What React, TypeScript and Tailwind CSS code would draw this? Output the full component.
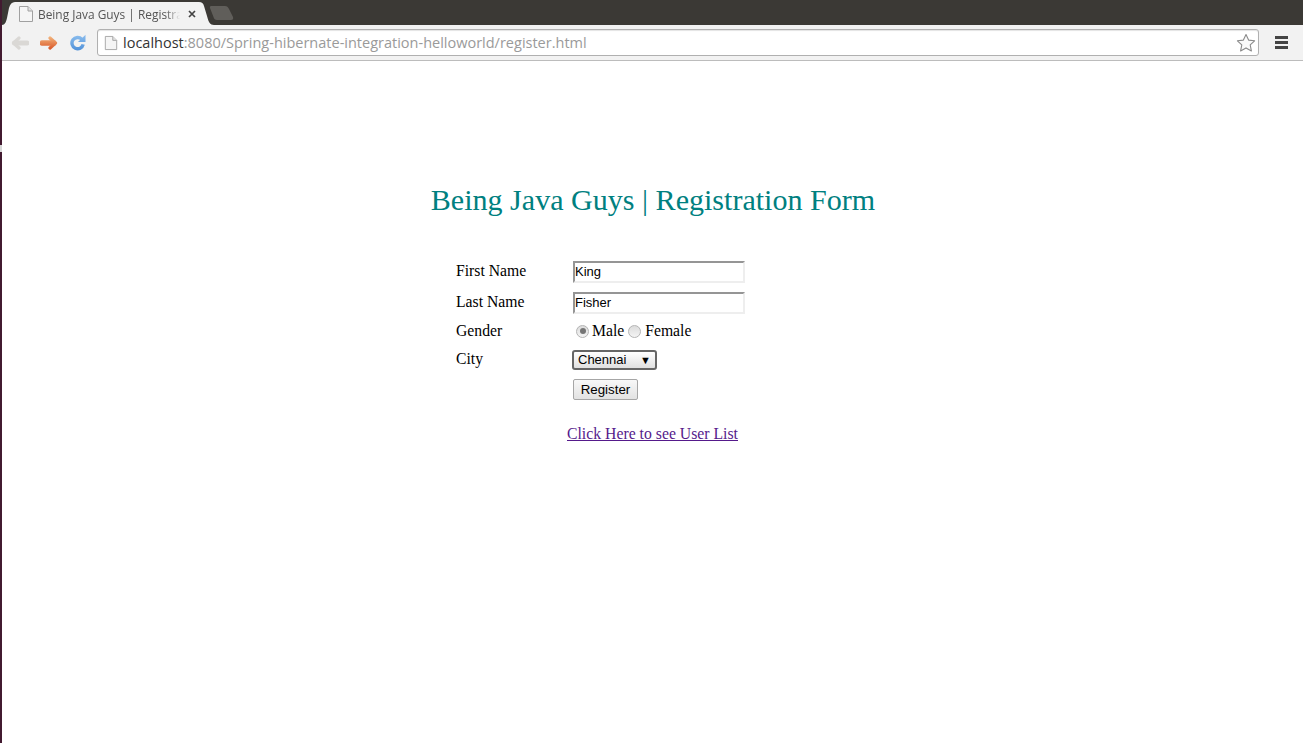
import React from "react";

const serif = "font-['Liberation_Serif',serif]";
const sans = "font-['Liberation_Sans',Arial,sans-serif]";
const ui = "font-['Open_Sans','Noto_Sans',sans-serif]";

function PageIcon({ className }: { className?: string }) {
  return (
    <svg viewBox="0 0 16 18" className={className} fill="none">
      <path d="M1.500 1.500h8.500l4.500 4.500v10.500h-13z" fill="#f5f5f5" stroke="#a0a0a0" />
      <path d="M10 1.500v4.500h4.500" fill="#e2e2e2" stroke="#a0a0a0" />
    </svg>
  );
}

function Row({ label, children, className }: { label: string; children: React.ReactNode; className: string }) {
  return (
    <div className={`flex ${className}`}>
      <div className="w-[117px] pt-[1px] text-[15.7px] leading-[18px]">{label}</div>
      <div className="flex items-start">{children}</div>
    </div>
  );
}

function TextBox({ value }: { value: string }) {
  return (
    <div className={`w-[172px] h-[22px] border-2 border-t-[#959595] border-l-[#959595] border-r-[#eeeeee] border-b-[#eeeeee] bg-white text-[13px] leading-[18px] text-black ${sans}`}>
      {value}
    </div>
  );
}

function Radio({ checked }: { checked?: boolean }) {
  return (
    <span className="w-[13px] h-[13px] rounded-full border border-[#b4b4b4] bg-gradient-to-b from-[#dcdcdc] to-[#f4f4f4] flex items-center justify-center shrink-0">
      {checked && <span className="w-[6px] h-[6px] rounded-full bg-[#757575]" />}
    </span>
  );
}

export default function App() {
  return (
    <div className="flex h-[743px] w-[1303px] overflow-hidden bg-white">
      <div className="w-[2px] shrink-0 bg-[#421a30] flex flex-col">
        <div className="h-[145px]" />
        <div className="h-[7px] bg-[#d8d8d8]" />
      </div>
      <div className="flex-1 min-w-0 flex flex-col">
        <div className="h-[25px] shrink-0 bg-[#3b3935] flex items-end">
          <div className="relative w-[212px] h-[23px] shrink-0 flex items-center">
            <svg viewBox="0 0 212 23" className="absolute inset-0 w-[212px] h-[23px]">
              <path d="M0 23c3 0 4-3 5-7l2-10c1-4 3-6 6-6h184c3 0 4 1 5 4l3 10c1.500 6 3 9 7 9z" fill="#f2f2f2" />
            </svg>
            <PageIcon className="relative ml-[16px] w-[16px] h-[18px] shrink-0" />
            <span className={`relative ml-[4px] w-[145px] overflow-hidden whitespace-nowrap text-[11.9px] leading-[16px] text-[#555555] [mask-image:linear-gradient(to_right,black_88%,transparent_98%)] ${ui}`}>
              Being Java Guys | Registration Form
            </span>
            <svg viewBox="0 0 8 8" className="relative ml-[5px] w-[8px] h-[8px]" stroke="#444" strokeWidth="1.7">
              <path d="M1 1l6 6M7 1l-6 6" />
            </svg>
          </div>
          <svg viewBox="0 0 25 14" className="w-[25px] h-[14px] -ml-[5px] mb-[5px] shrink-0">
            <path d="M2 0h14c2 0 3 1 4 3l4 8c.5 2 0 3-2 3H8c-2 0-3-1-3.500-3L1 2c-.3-1 0-2 1-2z" fill="#605e5a" />
          </svg>
        </div>
        <div className="h-[36px] shrink-0 bg-[#f2f2f2] border-b border-[#bcbcbc] flex items-center pl-[9px] pr-[15px]">
          <svg viewBox="0 0 18 14" className="w-[18px] h-[14px] shrink-0" fill="none" stroke="#dad8d5" strokeLinecap="round" strokeLinejoin="round">
            <path d="M3.500 7H16" strokeWidth="5" />
            <path d="M8 2L2.500 7L8 12" strokeWidth="3.200" />
          </svg>
          <svg viewBox="0 0 18 14" className="w-[18px] h-[14px] ml-[11px] shrink-0" fill="none" strokeLinecap="round" strokeLinejoin="round">
            <defs>
              <linearGradient id="fw" gradientUnits="userSpaceOnUse" x1="0" y1="1" x2="0" y2="13">
                <stop offset="0" stopColor="#f2b27a" />
                <stop offset="1" stopColor="#d9592a" />
              </linearGradient>
            </defs>
            <path d="M2 6.500H14v1H2z" stroke="url(#fw)" strokeWidth="4.500" />
            <path d="M10 2l5.500 5L10 12" stroke="url(#fw)" strokeWidth="3.200" />
          </svg>
          <svg viewBox="0 0 18 18" className="w-[17px] h-[17px] ml-[11px] shrink-0" fill="none">
            <defs>
              <linearGradient id="rl" gradientUnits="userSpaceOnUse" x1="0" y1="0" x2="0" y2="18">
                <stop offset="0" stopColor="#8fc0ef" />
                <stop offset="1" stopColor="#4f90d8" />
              </linearGradient>
            </defs>
            <path d="M13.500 5.500A6 6 0 1 0 15 11" stroke="url(#rl)" strokeWidth="3.600" />
            <path d="M9.500 8.500h8V.8z" fill="url(#rl)" />
          </svg>
          <div className="ml-[11px] flex-1 min-w-0 h-[27px] rounded-[3px] border border-[#b0b0b0] bg-white flex items-center pl-[6px] pr-[2px] shadow-[inset_0_1px_1px_#e4e4e4]">
            <PageIcon className="w-[14px] h-[16px] shrink-0" />
            <span className={`ml-[5px] text-[14.5px] leading-[20px] whitespace-nowrap text-[#9a9a9a] ${ui}`}>
              <span className="text-[#333]">localhost</span>:8080/Spring-hibernate-integration-helloworld/register.html
            </span>
            <svg viewBox="0 0 20 20" className="ml-auto w-[20px] h-[20px] shrink-0" fill="#fbfbfb" stroke="#8a8a8a" strokeWidth="1.1">
              <path d="M10 1.500l2.600 5.600 6 .7-4.400 4.100 1.200 6-5.400-3-5.400 3 1.200-6L1.400 7.800l6-.7z" strokeLinejoin="round" />
            </svg>
          </div>
          <div className="ml-[16px] w-[13px] flex flex-col gap-[2px] shrink-0">
            <span className="h-[3px] bg-[#444]" />
            <span className="h-[3px] bg-[#444]" />
            <span className="h-[3px] bg-[#444]" />
          </div>
        </div>
        <div className={`flex-1 bg-white text-black ${serif}`}>
          <h2 className="mt-[122px] pl-[1px] text-center text-[30.07px] leading-[34px] text-[#008080] font-normal">
            Being Java Guys | Registration Form
          </h2>
          <div className="ml-[454px] mt-[44px] flex flex-col">
            <Row label="First Name" className="h-[31px]">
              <TextBox value="King" />
            </Row>
            <Row label="Last Name" className="h-[29px]">
              <TextBox value="Fisher" />
            </Row>
            <Row label="Gender" className="h-[28px]">
              <div className="flex items-center h-[18px] pl-[3px] text-[15.7px] leading-[18px] mt-[1px]">
                <Radio checked />
                <span className="ml-[3px]">Male</span>
                <span className="ml-[4px]"><Radio /></span>
                <span className="ml-[4px]">Female</span>
              </div>
            </Row>
            <Row label="City" className="h-[30px]">
              <div className={`-ml-[1px] mt-[1px] w-[85px] h-[20px] rounded-[3px] border-2 border-[#666666] bg-gradient-to-b from-[#ffffff] to-[#e0e0e0] flex items-center pl-[4px] pr-[4px] text-[13px] leading-[16px] ${sans}`}>
                <span>Chennai</span>
                <span className="ml-auto text-[11px] leading-[10px]">▼</span>
              </div>
            </Row>
            <Row label="" className="h-[21px]">
              <div className={`w-[65px] h-[21px] rounded-[2px] border border-[#a6a6a6] bg-gradient-to-b from-[#f8f8f8] to-[#e2e2e2] flex items-center justify-center text-[13.33px] leading-[16px] ${sans}`}>
                Register
              </div>
            </Row>
          </div>
          <div className="mt-[25px] text-center text-[15.75px] leading-[18px]">
            <a className="text-[#551a8b] underline">Click Here to see User List</a>
          </div>
        </div>
      </div>
    </div>
  );
}
